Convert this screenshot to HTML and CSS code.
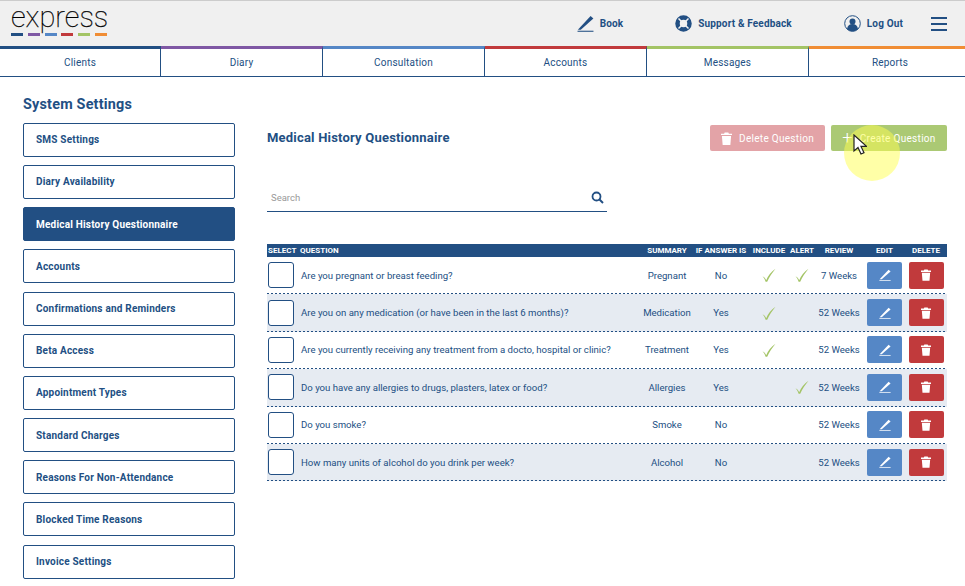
FILE: index.html
```html
<!DOCTYPE html>
<html lang="en">
  <head>
    <meta charset="UTF-8">
    <title>System Settings</title>
    <link rel="stylesheet" href="styles.css">
  </head>
  <body>
    <svg class="icon-defs" width="0" height="0">
      <symbol id="trash" viewBox="0 0 12 14">
        <path d="M4 0.5h4l0.6 1.2H12v1.6H0V1.7h3.4zM1 4.2h10l-0.8 9.8H1.800z" fill="currentColor"/>
      </symbol>
      <symbol id="pen" viewBox="0 0 16 16">
        <path d="M0.800 13.800L12.800 1l2.600 2.400L3.600 13.800z" fill="currentColor"/>
        <path d="M0.500 15.300h15" stroke="currentColor" stroke-width="1"/>
      </symbol>
      <symbol id="tick" viewBox="0 0 14 14">
        <path d="M0.500 8.300c1.700 0.800 2.900 2.100 3.700 3.900C6 8 9 4 13.500 0.800C10 5 7.400 9 5.200 13.800H3.600C3 11.500 2 10 0.500 8.300z" fill="currentColor"/>
      </symbol>
    </svg>

    <header class="topbar">
      <div class="logo">
        <span class="logo-word">express</span>
        <div class="logo-dashes">
          <i class="c-navy"></i><i class="c-purple"></i><i class="c-blue"></i><i class="c-red"></i><i class="c-green"></i><i class="c-orange"></i>
        </div>
      </div>
      <nav class="top-links">
        <a class="top-link link-book">
          <svg width="17" height="17"><use href="#pen"/></svg>
          Book
        </a>
        <a class="top-link link-support">
          <svg width="17" height="17" viewBox="0 0 17 17">
            <circle cx="8.500" cy="8.500" r="6" fill="none" stroke="currentColor" stroke-width="4.500"/>
            <path d="M3.500 3.500l3 3M13.500 3.500l-3 3M3.500 13.500l3-3M13.500 13.500l-3-3" stroke="#f0f0f0" stroke-width="1.500"/>
          </svg>
          Support &amp; Feedback
        </a>
        <a class="top-link link-logout">
          <svg width="17" height="17" viewBox="0 0 17 17">
            <circle cx="8.500" cy="8.500" r="7.800" fill="none" stroke="currentColor" stroke-width="1"/>
            <circle cx="8.500" cy="6.500" r="3" fill="currentColor"/>
            <path d="M3 14c0.500-3.500 2.500-5 5.500-5s5 1.500 5.500 5c-1.500 1.500-3.500 2.300-5.500 2.300S4.500 15.500 3 14z" fill="currentColor"/>
          </svg>
          Log Out
        </a>
        <a class="menu-btn"><span></span><span></span><span></span></a>
      </nav>
    </header>

    <nav class="tabs">
      <a class="tab c-navy-top">Clients</a>
      <a class="tab c-purple-top">Diary</a>
      <a class="tab c-blue-top">Consultation</a>
      <a class="tab c-red-top">Accounts</a>
      <a class="tab c-green-top">Messages</a>
      <a class="tab c-orange-top">Reports</a>
    </nav>

    <main class="page">
      <aside class="sidebar">
        <h2>System Settings</h2>
        <ul class="side-list">
          <li>SMS Settings</li>
          <li>Diary Availability</li>
          <li class="active">Medical History Questionnaire</li>
          <li>Accounts</li>
          <li>Confirmations and Reminders</li>
          <li>Beta Access</li>
          <li>Appointment Types</li>
          <li>Standard Charges</li>
          <li>Reasons For Non-Attendance</li>
          <li>Blocked Time Reasons</li>
          <li>Invoice Settings</li>
        </ul>
      </aside>

      <section class="content">
        <div class="content-head">
          <h3>Medical History Questionnaire</h3>
          <button class="action delete-q"><svg width="11" height="13"><use href="#trash"/></svg>Delete Question</button>
          <button class="action create-q"><span class="plus">+</span>Create Question</button>
        </div>

        <div class="search">
          <span>Search</span>
          <svg width="13" height="13" viewBox="0 0 13 13">
            <circle cx="5.500" cy="5.500" r="4" fill="none" stroke="currentColor" stroke-width="1.800"/>
            <path d="M8.500 8.500l3.500 3.500" stroke="currentColor" stroke-width="2"/>
          </svg>
        </div>

        <div class="row head">
          <div>SELECT</div>
          <div class="q">QUESTION</div>
          <div class="mid">SUMMARY</div>
          <div class="mid">IF ANSWER IS</div>
          <div class="mid">INCLUDE</div>
          <div class="mid">ALERT</div>
          <div class="mid">REVIEW</div>
          <div class="mid">EDIT</div>
          <div class="mid">DELETE</div>
        </div>

        <div class="row">
          <div><span class="check"></span></div>
          <div class="q">Are you pregnant or breast feeding?</div>
          <div class="mid">Pregnant</div>
          <div class="mid">No</div>
          <div class="mid"><svg class="tick" width="14" height="14"><use href="#tick"/></svg></div>
          <div class="mid"><svg class="tick" width="14" height="14"><use href="#tick"/></svg></div>
          <div class="mid">7 Weeks</div>
          <div class="mid"><a class="sq edit"><svg width="12" height="12"><use href="#pen"/></svg></a></div>
          <div class="mid"><a class="sq del"><svg width="10" height="12"><use href="#trash"/></svg></a></div>
        </div>
        <div class="row">
          <div><span class="check"></span></div>
          <div class="q">Are you on any medication (or have been in the last 6 months)?</div>
          <div class="mid">Medication</div>
          <div class="mid">Yes</div>
          <div class="mid"><svg class="tick" width="14" height="14"><use href="#tick"/></svg></div>
          <div class="mid"></div>
          <div class="mid">52 Weeks</div>
          <div class="mid"><a class="sq edit"><svg width="12" height="12"><use href="#pen"/></svg></a></div>
          <div class="mid"><a class="sq del"><svg width="10" height="12"><use href="#trash"/></svg></a></div>
        </div>
        <div class="row">
          <div><span class="check"></span></div>
          <div class="q">Are you currently receiving any treatment from a docto, hospital or clinic?</div>
          <div class="mid">Treatment</div>
          <div class="mid">Yes</div>
          <div class="mid"><svg class="tick" width="14" height="14"><use href="#tick"/></svg></div>
          <div class="mid"></div>
          <div class="mid">52 Weeks</div>
          <div class="mid"><a class="sq edit"><svg width="12" height="12"><use href="#pen"/></svg></a></div>
          <div class="mid"><a class="sq del"><svg width="10" height="12"><use href="#trash"/></svg></a></div>
        </div>
        <div class="row">
          <div><span class="check"></span></div>
          <div class="q">Do you have any allergies to drugs, plasters, latex or food?</div>
          <div class="mid">Allergies</div>
          <div class="mid">Yes</div>
          <div class="mid"></div>
          <div class="mid"><svg class="tick" width="14" height="14"><use href="#tick"/></svg></div>
          <div class="mid">52 Weeks</div>
          <div class="mid"><a class="sq edit"><svg width="12" height="12"><use href="#pen"/></svg></a></div>
          <div class="mid"><a class="sq del"><svg width="10" height="12"><use href="#trash"/></svg></a></div>
        </div>
        <div class="row">
          <div><span class="check"></span></div>
          <div class="q">Do you smoke?</div>
          <div class="mid">Smoke</div>
          <div class="mid">No</div>
          <div class="mid"></div>
          <div class="mid"></div>
          <div class="mid">52 Weeks</div>
          <div class="mid"><a class="sq edit"><svg width="12" height="12"><use href="#pen"/></svg></a></div>
          <div class="mid"><a class="sq del"><svg width="10" height="12"><use href="#trash"/></svg></a></div>
        </div>
        <div class="row">
          <div><span class="check"></span></div>
          <div class="q">How many units of alcohol do you drink per week?</div>
          <div class="mid">Alcohol</div>
          <div class="mid">No</div>
          <div class="mid"></div>
          <div class="mid"></div>
          <div class="mid">52 Weeks</div>
          <div class="mid"><a class="sq edit"><svg width="12" height="12"><use href="#pen"/></svg></a></div>
          <div class="mid"><a class="sq del"><svg width="10" height="12"><use href="#trash"/></svg></a></div>
        </div>
      </section>
    </main>

    <!-- screen recorder's click highlight and pointer -->
    <div class="highlight"></div>
    <svg class="pointer" width="14" height="22" viewBox="0 0 14 22">
      <path d="M1 1v16l4-3.500 3 6.500 3-1.300-3-6.300h5.500z" fill="#fff" stroke="#222" stroke-width="1.200"/>
    </svg>
  </body>
</html>
```

FILE: styles.css
```css
* {
  box-sizing: border-box;
}

html,
body {
  height: 586px;
  overflow: hidden;
}

body {
  margin: 0;
  position: relative;
  font-family: Roboto, "Liberation Sans", sans-serif;
  color: #224f83;
  background-color: #fff;
}

.icon-defs {
  position: absolute;
}

/* top bar */
.topbar {
  height: 46px;
  display: flex;
  align-items: center;
  justify-content: space-between;
  background-color: #f0f0f0;
  border-top: 1px solid #ccc;
}

.logo {
  margin-left: 11px;
  width: 96px;
}

.logo-word {
  display: block;
  height: 19px;
  font-family: Roboto, sans-serif;
  font-size: 29px;
  font-weight: 100;
  line-height: 12px;
  color: #000;
  -webkit-text-stroke: 0.25px #000;
}

.logo-dashes {
  display: flex;
  justify-content: space-between;
  margin-top: 3px;
}

.logo-dashes i {
  width: 12px;
  height: 3px;
}

.c-navy { background-color: #224f83; }
.c-purple { background-color: #7f58a4; }
.c-blue { background-color: #5587c6; }
.c-red { background-color: #c13a3c; }
.c-green { background-color: #a3c465; }
.c-orange { background-color: #f08d35; }

.top-links {
  display: flex;
  align-items: center;
}

.top-link {
  display: flex;
  align-items: center;
  gap: 6px;
  font-size: 10px;
  font-weight: 700;
  letter-spacing: 0.15px;
}

.link-book {
  margin-right: 52px;
}

.link-support {
  margin-right: 52px;
}

.link-logout {
  margin-right: 28px;
}

.menu-btn {
  width: 16px;
  margin-right: 18px;
  display: flex;
  flex-direction: column;
  gap: 4px;
}

.menu-btn span {
  height: 2px;
  background-color: #224f83;
}

/* main tabs */
.tabs {
  display: grid;
  grid-template-columns: 161px 162px 162px 162px 162px 1fr;
  height: 31px;
  border-bottom: 1px solid #224f83;
}

.tab {
  display: flex;
  align-items: center;
  justify-content: center;
  font-size: 10px;
  letter-spacing: 0.2px;
  border-top: 3px solid;
  border-right: 1px solid #224f83;
}

.tab:last-child {
  border-right: none;
  padding-left: 6px;
}

.c-navy-top { border-top-color: #224f83; }
.c-purple-top { border-top-color: #7f58a4; }
.c-blue-top { border-top-color: #5587c6; }
.c-red-top { border-top-color: #c13a3c; }
.c-green-top { border-top-color: #a3c465; }
.c-orange-top { border-top-color: #f08d35; }

/* page body */
.page {
  display: flex;
  padding: 18px 18px 0 23px;
}

.sidebar {
  width: 212px;
  margin-right: 32px;
}

.sidebar h2 {
  margin: 1px 0 8.800px;
  height: 18px;
  font-size: 14.400px;
  font-weight: 700;
  line-height: 18px;
  letter-spacing: 0.2px;
}

.side-list {
  list-style: none;
  margin: 0;
  padding: 0;
  display: flex;
  flex-direction: column;
  gap: 8.200px;
}

.side-list li {
  height: 34px;
  display: flex;
  align-items: center;
  padding-left: 12px;
  border: 1px solid #224f83;
  border-radius: 2px;
  font-size: 10px;
  font-weight: 700;
  letter-spacing: 0.2px;
}

.side-list li.active {
  background-color: #224f83;
  color: #fff;
}

.content {
  flex: 1;
}

.content-head {
  display: flex;
  align-items: center;
  height: 26px;
  margin-top: 30px;
}

.content-head h3 {
  margin: 0 auto 2px 0;
  font-size: 13px;
  font-weight: 700;
  letter-spacing: 0.2px;
}

.action {
  height: 26px;
  width: 115px;
  display: flex;
  align-items: center;
  justify-content: center;
  gap: 7px;
  border: none;
  border-radius: 2px;
  color: #fff;
  font-family: inherit;
  font-size: 10px;
  letter-spacing: 0.3px;
  opacity: 0.9;
}

.delete-q {
  background-color: #e09a9e;
  margin-right: 6px;
}

.create-q {
  width: 116px;
  background-color: #a3c465;
}

.plus {
  font-size: 18px;
  font-weight: 300;
  line-height: 18px;
}

.search {
  width: 340px;
  height: 28px;
  margin-top: 33px;
  display: flex;
  align-items: center;
  justify-content: space-between;
  padding: 0 3px 0 4px;
  border-bottom: 1px solid #224f83;
  font-size: 9.500px;
  color: #999;
}

.search svg {
  color: #224f83;
}

/* questionnaire table */
.row {
  display: grid;
  grid-template-columns: 33px 340px 54px 54px 42px 24px 50px 41px 42px;
  align-items: center;
  height: 37.400px;
  padding-bottom: 1px;
  background-image: repeating-linear-gradient(to right, #224f83 0 2px, transparent 2px 4px);
  background-size: 100% 1px;
  background-position: bottom;
  background-repeat: no-repeat;
  font-size: 9.600px;
}

.row:nth-child(odd) {
  background-color: #e6ebf2;
}

.row.head {
  height: 13px;
  margin-top: 32px;
  padding-bottom: 0;
  background-image: none;
  background-color: #224f83;
  color: #fff;
  font-size: 8px;
  font-weight: 700;
}

.row.head > div:first-child {
  padding-left: 1px;
}

.q {
  padding-left: 1px;
}

.head .q {
  padding-left: 0;
}

.mid {
  text-align: center;
  white-space: nowrap;
}

.check {
  display: block;
  width: 26px;
  height: 26px;
  margin-left: 1px;
  background-color: #fff;
  border: 1px solid #224f83;
  border-radius: 3px;
}

.tick {
  display: block;
  margin: 0 auto;
  color: #a3c465;
}

.sq {
  display: flex;
  align-items: center;
  justify-content: center;
  width: 35px;
  height: 27px;
  margin: 0 auto;
  border-radius: 2px;
  color: #fff;
}

.edit {
  background-color: #5587c6;
}

.del {
  background-color: #c13a3c;
}

/* overlay from the screen recording */
.highlight {
  position: absolute;
  left: 844px;
  top: 125px;
  width: 56px;
  height: 56px;
  border-radius: 50%;
  background-color: rgba(255, 255, 80, 0.5);
}

.pointer {
  position: absolute;
  left: 853px;
  top: 134px;
}
```
